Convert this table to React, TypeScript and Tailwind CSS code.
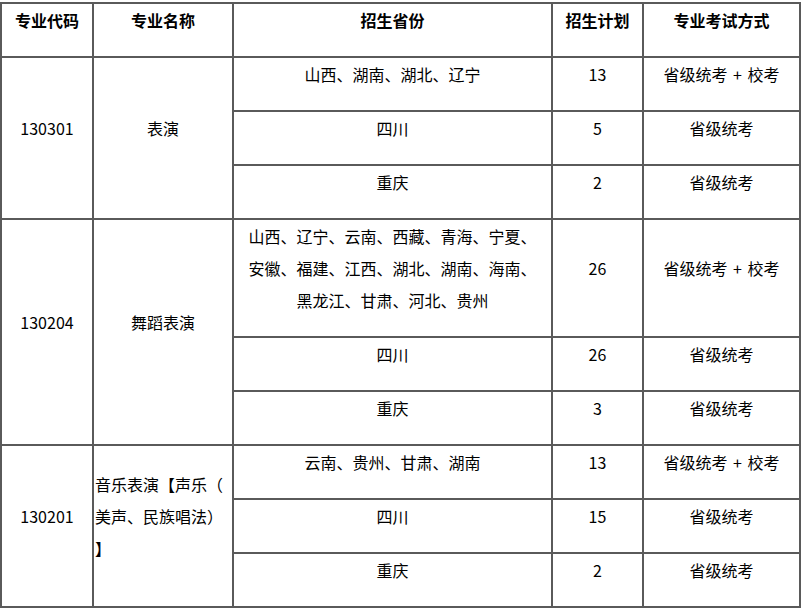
import React from 'react';

type Row = { provinces: React.ReactNode; plan: string; exam: React.ReactNode };

type Group = { code: string; name: React.ReactNode; nameLeft?: boolean; rows: Row[] };

const both = (
    <>
        省级统考 <span className="mx-[2px]">+</span> 校考
    </>
);

const groups: Group[] = [
    {
        code: '130301',
        name: '表演',
        rows: [
            { provinces: '山西、湖南、湖北、辽宁', plan: '13', exam: both },
            { provinces: '四川', plan: '5', exam: '省级统考' },
            { provinces: '重庆', plan: '2', exam: '省级统考' },
        ],
    },
    {
        code: '130204',
        name: '舞蹈表演',
        rows: [
            {
                provinces: (
                    <>
                        山西、辽宁、云南、西藏、青海、宁夏、
                        <br />
                        安徽、福建、江西、湖北、湖南、海南、
                        <br />
                        黑龙江、甘肃、河北、贵州
                    </>
                ),
                plan: '26',
                exam: both,
            },
            { provinces: '四川', plan: '26', exam: '省级统考' },
            { provinces: '重庆', plan: '3', exam: '省级统考' },
        ],
    },
    {
        code: '130201',
        nameLeft: true,
        name: (
            <>
                音乐表演【声乐（
                <br />
                美声、民族唱法）
                <br />】
            </>
        ),
        rows: [
            { provinces: '云南、贵州、甘肃、湖南', plan: '13', exam: both },
            { provinces: '四川', plan: '15', exam: '省级统考' },
            { provinces: '重庆', plan: '2', exam: '省级统考' },
        ],
    },
];

const cell = 'border-2 border-[#5a5a5a] align-middle pt-0 pb-[20px] px-0 leading-[32px]';

const App: React.FC = () => {
    return (
        <div
            className="bg-white w-[802px] h-[611px] pt-[2px] text-[16px] text-black"
            style={{ fontFamily: '"Noto Sans CJK SC", "Noto Sans", sans-serif' }}
        >
            <table className="table-fixed border-collapse w-[799px]">
                <colgroup>
                    <col className="w-[92px]" />
                    <col className="w-[140px]" />
                    <col className="w-[319px]" />
                    <col className="w-[91px]" />
                    <col className="w-[157px]" />
                </colgroup>
                <thead>
                    <tr className="font-bold text-center">
                        <th className={cell}>专业代码</th>
                        <th className={cell}>专业名称</th>
                        <th className={cell}>招生省份</th>
                        <th className={cell}>招生计划</th>
                        <th className={cell}>专业考试方式</th>
                    </tr>
                </thead>
                <tbody>
                    {groups.map(group =>
                        group.rows.map((row, i) => (
                            <tr key={group.code + i} className="text-center">
                                {i === 0 && (
                                    <>
                                        <td rowSpan={group.rows.length} className={cell}>
                                            {group.code}
                                        </td>
                                        <td
                                            rowSpan={group.rows.length}
                                            className={`${cell} ${group.nameLeft ? 'text-left pl-[1px]' : ''}`}
                                        >
                                            {group.name}
                                        </td>
                                    </>
                                )}
                                <td className={cell}>{row.provinces}</td>
                                <td className={cell}>{row.plan}</td>
                                <td className={cell}>{row.exam}</td>
                            </tr>
                        ))
                    )}
                </tbody>
            </table>
        </div>
    );
};

export default App;
